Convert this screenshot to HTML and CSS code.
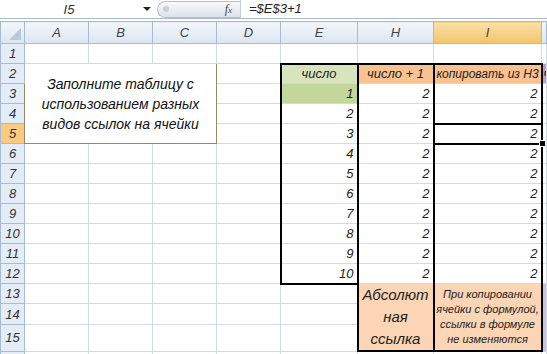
FILE: index.html
```html
<!DOCTYPE html>
<html lang="ru">
<head>
    <meta charset="UTF-8">
    <title>Абсолютные ссылки</title>
    <link rel="stylesheet" href="styles.css">
</head>
<body>
    <div class="fbar">
        <div class="namebox">I5</div>
        <span class="arrow"></span>
        <div class="pill"><span class="knob"></span><span class="fx">f<small>x</small></span></div>
        <div class="formula">=$E$3+1</div>
    </div>

    <table class="sheet">
        <colgroup>
            <col style="width:24px"><col style="width:64px"><col style="width:64px"><col style="width:64px">
            <col style="width:64px"><col style="width:77px"><col style="width:76px"><col style="width:108px"><col>
        </colgroup>
        <tr class="colhead">
            <th class="corner"><span class="tri"></span></th>
            <th>A</th><th>B</th><th>C</th><th>D</th><th>E</th><th>H</th><th class="sel">I</th><th></th>
        </tr>
        <tr><th class="rh">1</th><td></td><td></td><td></td><td></td><td></td><td></td><td></td><td></td></tr>
        <tr>
            <th class="rh">2</th>
            <td class="note" colspan="3" rowspan="4">Заполните таблицу с<br>использованием разных<br>видов ссылок на ячейки</td>
            <td></td>
            <td class="e top head-green">число</td>
            <td class="h top head-orange">число + 1</td>
            <td class="i top head-orange small">копировать из H3</td>
            <td class="j head-purple">ч</td>
        </tr>
        <tr><th class="rh">3</th><td></td><td class="e num green">1</td><td class="h num">2</td><td class="i num">2</td><td></td></tr>
        <tr><th class="rh">4</th><td></td><td class="e num">2</td><td class="h num">2</td><td class="i num">2</td><td></td></tr>
        <tr><th class="rh sel">5</th><td></td><td class="e num">3</td><td class="h num">2</td><td class="i num active">2<span class="handle"></span></td><td></td></tr>
        <tr><th class="rh">6</th><td></td><td></td><td></td><td></td><td class="e num">4</td><td class="h num">2</td><td class="i num">2</td><td></td></tr>
        <tr><th class="rh">7</th><td></td><td></td><td></td><td></td><td class="e num">5</td><td class="h num">2</td><td class="i num">2</td><td></td></tr>
        <tr><th class="rh">8</th><td></td><td></td><td></td><td></td><td class="e num">6</td><td class="h num">2</td><td class="i num">2</td><td></td></tr>
        <tr><th class="rh">9</th><td></td><td></td><td></td><td></td><td class="e num">7</td><td class="h num">2</td><td class="i num">2</td><td></td></tr>
        <tr><th class="rh">10</th><td></td><td></td><td></td><td></td><td class="e num">8</td><td class="h num">2</td><td class="i num">2</td><td></td></tr>
        <tr><th class="rh">11</th><td></td><td></td><td></td><td></td><td class="e num">9</td><td class="h num">2</td><td class="i num">2</td><td></td></tr>
        <tr><th class="rh">12</th><td></td><td></td><td></td><td></td><td class="e num bottom">10</td><td class="h num">2</td><td class="i num">2</td><td></td></tr>
        <tr>
            <th class="rh">13</th><td></td><td></td><td></td><td></td><td></td>
            <td class="h hleft bottom big-note" rowspan="3">Абсолют<br>ная<br>ссылка</td>
            <td class="i bottom tiny-note" rowspan="3">При копировании<br>ячейки с формулой,<br>ссылки в формуле<br>не изменяются</td>
            <td class="j light-purple" rowspan="3"></td>
        </tr>
        <tr><th class="rh">14</th><td></td><td></td><td></td><td></td><td></td></tr>
        <tr class="tall"><th class="rh">15</th><td></td><td></td><td></td><td></td><td></td></tr>
        <tr class="last"><th class="rh"></th><td></td><td></td><td></td><td></td><td></td><td></td><td></td><td></td></tr>
    </table>
</body>
</html>
```

FILE: styles.css
```css
html {
    overflow: hidden;
}
body {
    margin: 0;
    width: 547px;
    height: 354px;
    overflow: hidden;
    background: #ffffff;
    font-family: "Liberation Sans", Arial, sans-serif;
    font-style: italic;
    color: #222;
}
.fbar {
    display: flex;
    align-items: center;
    height: 18px;
    border-bottom: 1px solid #a9bbd0;
    margin-bottom: 2px;
    font-size: 13px;
}
.namebox {
    width: 138px;
    text-align: center;
    color: #333;
}
.arrow {
    width: 0;
    height: 0;
    border-left: 4px solid transparent;
    border-right: 4px solid transparent;
    border-top: 4px solid #222;
    margin: 0 6px 0 5px;
}
.pill {
    width: 82px;
    height: 15px;
    display: flex;
    align-items: center;
    justify-content: space-between;
    border: 1px solid #b5c0cd;
    border-right: none;
    border-radius: 9px 0 0 9px;
    background: linear-gradient(#f7f9fb, #dde3ea);
}
.knob {
    width: 6px;
    height: 6px;
    margin-left: 5px;
    border-radius: 50%;
    background: #c8ced6;
}
.fx {
    font-family: "Liberation Serif", serif;
    font-size: 12px;
    color: #444;
    margin-right: 8px;
}
.fx small {
    font-size: 9px;
}
.formula {
    padding-left: 8px;
    border-left: 1px solid #c5cfdb;
    height: 18px;
    line-height: 18px;
}

.sheet {
    border-collapse: collapse;
    table-layout: fixed;
    width: 547px;
    font-size: 13px;
}
.sheet tr {
    height: 20px;
}
.sheet tr.colhead {
    height: 22px;
}
.sheet tr.tall {
    height: 26px;
}
.sheet tr.last {
    height: 4px;
}
.sheet th,
.sheet td {
    border: 1px solid #d4dae5;
    padding: 0 3px;
    white-space: nowrap;
    overflow: hidden;
    font-weight: normal;
}
.sheet .colhead th {
    background: linear-gradient(#f3f7fb, #dce5f0);
    border-color: #a7bcd3;
    color: #444;
    text-align: center;
}
.sheet .colhead th.sel {
    background: linear-gradient(#fbe0a8, #f2c46a);
}
.corner {
    position: relative;
}
.tri {
    position: absolute;
    right: 3px;
    bottom: 3px;
    width: 0;
    height: 0;
    border-left: 12px solid transparent;
    border-bottom: 12px solid #b9c8da;
}
.sheet .rh {
    background: #e4ecf7;
    border-color: #a7bcd3;
    color: #333;
    text-align: center;
    padding: 0;
}
.sheet .rh.sel {
    background: #f8cb80;
}

.sheet .note {
    border: 1px solid #8c8c68;
    text-align: center;
    vertical-align: middle;
    font-size: 14px;
    line-height: 20px;
    color: #111;
}
.num {
    text-align: right;
}
.sheet .e {
    border-left: 2px solid #000;
    border-right: 2px solid #000;
}
.sheet .h,
.sheet .i {
    border-right: 2px solid #000;
}
.sheet .top {
    border-top: 2px solid #000;
    text-align: center;
}
.sheet .bottom {
    border-bottom: 2px solid #000;
}
.sheet .hleft {
    border-left: 2px solid #000;
}
.sheet .active {
    position: relative;
    overflow: visible;
    border-top: 2px solid #000;
    border-bottom: 2px solid #000;
}
.handle {
    position: absolute;
    right: -5px;
    bottom: -4px;
    width: 5px;
    height: 5px;
    background: #000;
    border: 1px solid #fff;
}
.head-green {
    background: #d7e4bd;
}
.green {
    background: #c4d79b;
}
.head-orange {
    background: #fac191;
}
.sheet .head-purple {
    background: #b3a2c8;
    padding: 0 1px;
}
.light-purple {
    background: #ccc0da;
}
.sheet .small {
    font-size: 12px;
    padding: 0 1px;
}
.big-note {
    background: #fcd5b4;
    text-align: center;
    font-size: 15px;
    line-height: 22px;
}
.sheet .tiny-note {
    background: #fcd5b4;
    text-align: center;
    font-size: 11px;
    line-height: 15px;
    padding: 0 1px;
}
```
